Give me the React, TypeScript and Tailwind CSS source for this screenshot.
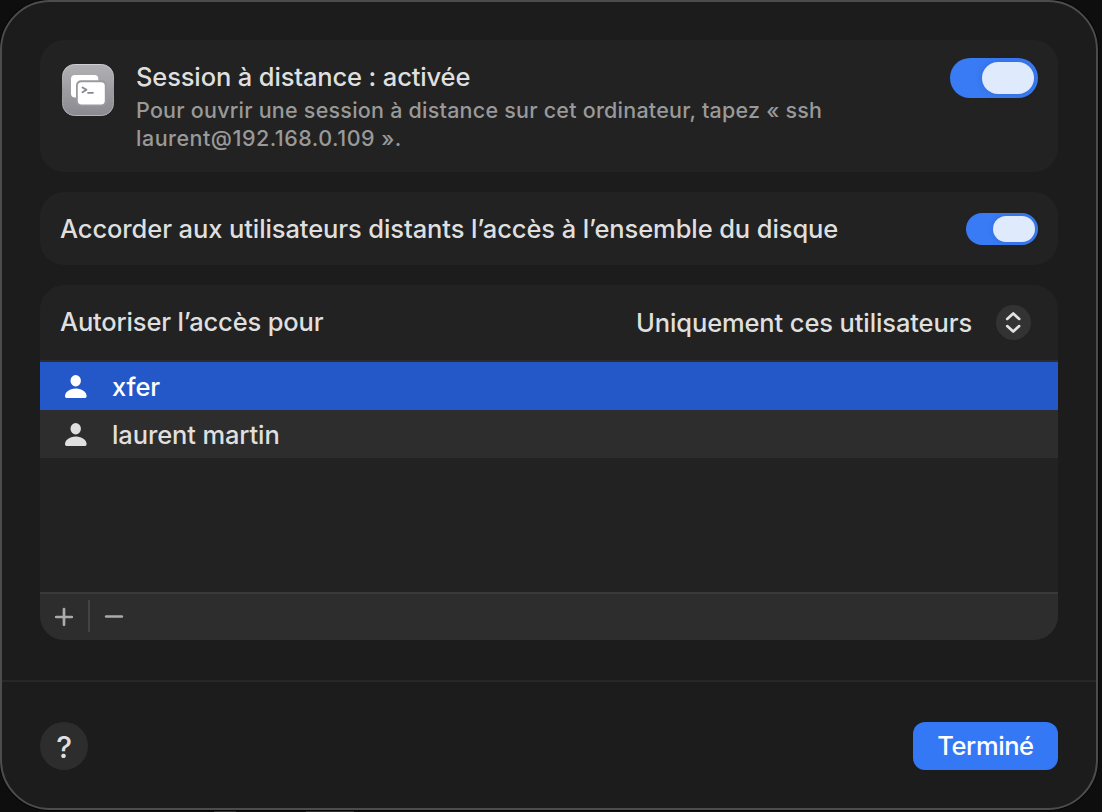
function Toggle({ large = false }: { large?: boolean }) {
  return (
    <div
      role="switch"
      aria-checked="true"
      className={
        large
          ? "flex h-10 w-[88px] shrink-0 items-center justify-end rounded-full bg-[#397bf4] pr-1"
          : "flex h-8 w-[72px] shrink-0 items-center justify-end rounded-full bg-[#397bf4] pr-[3px]"
      }
    >
      <div
        className={
          large
            ? "h-8 w-[52px] rounded-full bg-[#dfeafd] shadow-[0_0_8px_rgba(0,0,0,0.12)]"
            : "h-[26px] w-[42px] rounded-full bg-[#dfeafd] shadow-[0_0_7px_rgba(0,0,0,0.12)]"
        }
      />
    </div>
  );
}

function TerminalIcon() {
  return (
    <svg width="52" height="52" viewBox="0 0 52 52" className="shrink-0">
      <defs>
        <linearGradient id="tile" x1="0" y1="0" x2="0" y2="1">
          <stop offset="0" stopColor="#b1b0b5" />
          <stop offset="1" stopColor="#8b8a90" />
        </linearGradient>
        <linearGradient id="edge" x1="0" y1="0" x2="0" y2="1">
          <stop offset="0" stopColor="#d0cfd3" />
          <stop offset="0.5" stopColor="#98979c" />
          <stop offset="1" stopColor="#b5b4b8" />
        </linearGradient>
      </defs>
      <rect x="0.5" y="0.5" width="51" height="51" rx="12" fill="url(#tile)" stroke="url(#edge)" />
      <rect x="9" y="11" width="27.3" height="22.6" rx="4" fill="#fff" />
      <rect x="14" y="16.3" width="30.5" height="26" rx="5" fill="#9a999e" />
      <rect x="15.8" y="18.2" width="27" height="22.3" rx="3.7" fill="#fff" />
      <path d="M20.5 23.4l4 2.4-4 2.5M26 28.8h5" fill="none" stroke="#88878c" strokeWidth="1.8" strokeLinecap="round" strokeLinejoin="round" />
    </svg>
  );
}

function UserRow({ name, selected = false }: { name: string; selected?: boolean }) {
  return (
    <div
      className={
        selected
          ? "flex h-12 items-center bg-[#2458c9] pl-6 text-white"
          : "flex h-12 items-center bg-[#2d2d2d] pl-6 text-[#dfdfdf]"
      }
    >
      <svg width="24" height="26" viewBox="0 0 24 26" fill="currentColor" className="shrink-0">
        <ellipse cx="11.7" cy="7.7" rx="5.2" ry="5.7" />
        <path d="M3.3 25C1.7 25 1 24.2 1 22.9 1 19.4 5.2 15.4 11.8 15.4S22.6 19.4 22.6 22.9c0 1.3-.7 2.1-2.3 2.1Z" />
      </svg>
      <span className="pt-0.5 pl-6 leading-8 whitespace-nowrap">{name}</span>
    </div>
  );
}

export default function App() {
  return (
    <div className="relative h-[812px] w-[1102px] overflow-hidden bg-[#0e0e0e] font-['Inter',sans-serif] text-[25.5px] font-[450] tracking-[-0.12px] text-[#dfdfdf]">
      <div className="absolute top-[811px] left-[214px] h-px w-[22px] bg-[#303030]" />
      <div className="absolute top-[811px] left-[306px] h-px w-12 bg-[#303030]" />
      <main className="relative flex h-[810px] w-[1098px] flex-col rounded-[50px] border-2 border-[#4c4c4c] bg-[#1c1c1c] shadow-[0_0_0_1px_#050505]">
        <div className="flex h-[678px] flex-col gap-5 px-[38px] pt-[38px]">
          <section className="flex h-[132px] shrink-0 rounded-3xl bg-[#222222] pt-[18px] pr-5 pl-[22px]">
            <div className="pt-1.5">
              <TerminalIcon />
            </div>
            <div className="flex-1 pl-[22px]">
              <h1 className="pt-0.5 text-[25.5px] leading-[34px] font-[450] tracking-[-0.14px] whitespace-nowrap">Session à distance : activée</h1>
              <p className="pt-0.5 text-[21.5px] leading-7 tracking-[0.23px] whitespace-nowrap text-[#999999]">
                Pour ouvrir une session à distance sur cet ordinateur, tapez « ssh
                <br />
                <span className="tracking-[0.5px]">laurent@192.168.0.109 ».</span>
              </p>
            </div>
            <Toggle large />
          </section>

          <section className="flex h-[73px] shrink-0 items-center justify-between rounded-3xl bg-[#222222] px-5">
            <span className="pt-px tracking-[-0.1px] whitespace-nowrap">Accorder aux utilisateurs distants l’accès à l’ensemble du disque</span>
            <Toggle />
          </section>

          <section className="flex h-[355px] shrink-0 flex-col overflow-hidden rounded-3xl bg-[#222222]">
            <div className="flex h-[77px] shrink-0 items-center justify-between border-b-2 border-[#2d2d2d] pr-[27px] pl-5">
              <span className="tracking-[-0.17px] whitespace-nowrap">Autoriser l’accès pour</span>
              <div className="flex items-center gap-6">
                <span className="pt-px whitespace-nowrap">Uniquement ces utilisateurs</span>
                <div className="flex size-[35px] items-center justify-center rounded-full bg-[#333333]">
                  <svg width="19" height="25" viewBox="0 0 19 25" fill="none" stroke="#e2e2e2" strokeWidth="2.7" strokeLinecap="round" strokeLinejoin="round">
                    <path d="M3.2 8.9l6-5.5 6 5.5M3.2 16.1l6 5.5 6-5.5" />
                  </svg>
                </div>
              </div>
            </div>
            <div className="flex-1">
              <UserRow name="xfer" selected />
              <UserRow name="laurent martin" />
            </div>
            <div className="flex h-12 shrink-0 items-start border-t-2 border-[#393939] bg-[#2d2d2d]">
              <svg width="48" height="46" viewBox="0 0 48 46" stroke="#ababab" strokeWidth="2.7" strokeLinecap="round">
                <path d="M16.2 23h15.6M24 15.2v15.6" />
              </svg>
              <div className="mt-1.5 h-8 w-0.5 bg-[#434343]" />
              <svg width="48" height="46" viewBox="0 0 48 46" stroke="#ababab" strokeWidth="2.7" strokeLinecap="round">
                <path d="M16.2 22.5h15.6" />
              </svg>
            </div>
          </section>
        </div>

        <footer className="flex flex-1 items-start justify-between border-t-2 border-[#272727] px-[38px] pt-10">
          <button className="flex size-12 items-center justify-center rounded-full bg-[#2d2d2d] pt-px text-[30px] leading-none font-medium">?</button>
          <button className="flex h-12 w-[145px] items-center justify-center rounded-xl bg-[#3478f6] pt-px font-medium tracking-[-0.4px] text-white">Terminé</button>
        </footer>
      </main>
    </div>
  );
}
